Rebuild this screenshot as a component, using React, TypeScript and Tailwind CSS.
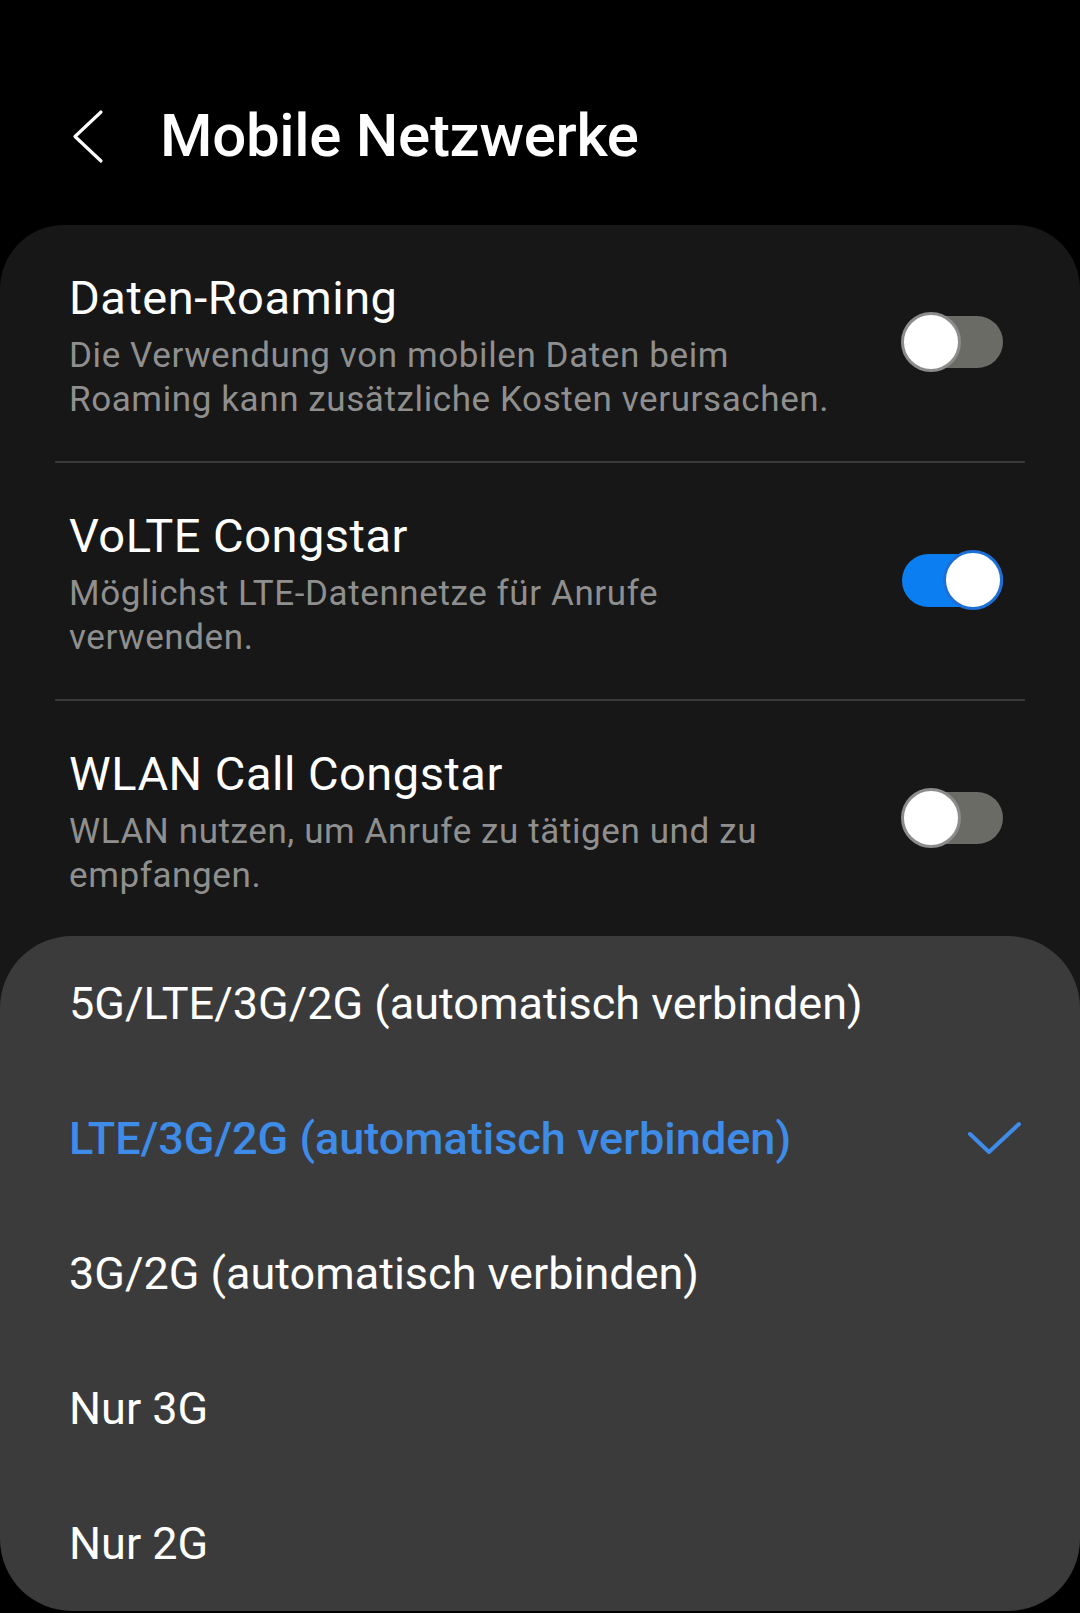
import React from 'react';

interface SettingRow {
  title: string;
  lines: string[];
  on: boolean;
}

const rows: SettingRow[] = [
  {
    title: 'Daten-Roaming',
    lines: ['Die Verwendung von mobilen Daten beim', 'Roaming kann zusätzliche Kosten verursachen.'],
    on: false,
  },
  {
    title: 'VoLTE Congstar',
    lines: ['Möglichst LTE-Datennetze für Anrufe', 'verwenden.'],
    on: true,
  },
  {
    title: 'WLAN Call Congstar',
    lines: ['WLAN nutzen, um Anrufe zu tätigen und zu', 'empfangen.'],
    on: false,
  },
];

const options = [
  '5G/LTE/3G/2G (automatisch verbinden)',
  'LTE/3G/2G (automatisch verbinden)',
  '3G/2G (automatisch verbinden)',
  'Nur 3G',
  'Nur 2G',
];

const Toggle: React.FC<{ on: boolean }> = ({ on }) => {
  if (on) {
    return (
      <div className="relative w-[101px] h-[53px] rounded-full bg-[#0b7ff2] shrink-0 -mt-[8px]">
        <div className="absolute right-0 top-1/2 -translate-y-1/2 w-[60px] h-[60px] rounded-full bg-white border-[3px] border-[#1d6fd6]" />
      </div>
    );
  }
  return (
    <div className="relative w-[101px] h-[52px] rounded-full bg-[#6b6b66] shrink-0 -mt-[8px]">
      <div className="absolute -left-[1px] top-1/2 -translate-y-1/2 w-[60px] h-[60px] rounded-full bg-white border-[3px] border-[#8c8c8c]" />
    </div>
  );
};

export default function App() {
  const selected = 1;

  return (
    <div
      className="relative w-[1080px] h-[1613px] bg-black overflow-hidden"
      style={{ fontFamily: 'Roboto, "Noto Sans", sans-serif' }}
    >
      {/* HEADER */}
      <div className="h-[225px] flex items-center pt-[46px]">
        <svg width="40" height="60" viewBox="0 0 40 60" className="ml-[68px]">
          <path d="M33 6 L7 30.5 L33 55" fill="none" stroke="#ffffff" strokeWidth="3.2" strokeLinecap="round" strokeLinejoin="round" />
        </svg>
        <h1 className="ml-[52px] text-[60px] leading-[70px] font-medium text-white tracking-[-0.3px]">
          Mobile Netzwerke
        </h1>
      </div>

      {/* SETTINGS CARD */}
      <div className="bg-[#171717] rounded-t-[64px] h-[1200px]">
        {rows.map((row, i) => (
          <div key={row.title}>
            <div className="flex items-center justify-between pl-[69px] pr-[77px] pt-[45px] pb-[39px]">
              <div>
                <div className="text-[47px] leading-[56px] text-white tracking-[0.5px]">{row.title}</div>
                <div className="mt-[8px] text-[35px] leading-[44px] text-[#8f8f8f] tracking-[0.6px] whitespace-nowrap">
                  {row.lines.map((l) => (
                    <div key={l}>{l}</div>
                  ))}
                </div>
              </div>
              <Toggle on={row.on} />
            </div>
            {i < rows.length - 1 && <div className="mx-[55px] h-[2px] bg-[#3a3a3a]" />}
          </div>
        ))}
      </div>

      {/* BOTTOM SHEET */}
      <div className="absolute left-0 right-0 top-[936px] h-[675px] bg-[#3b3b3b] rounded-[72px] flex flex-col">
        {options.map((opt, i) => (
          <div key={opt} className="h-[135px] flex items-center justify-between pl-[69px] pr-[56px]">
            <span
              className={`text-[45px] leading-[52px] ${i === selected ? 'text-[#3e8ce8] font-medium' : 'text-white'}`}
            >
              {opt}
            </span>
            {i === selected && (
              <svg width="60" height="40" viewBox="0 0 60 40">
                <path d="M6 15 L25 33 L55 5" fill="none" stroke="#3e8ce8" strokeWidth="4" strokeLinecap="round" strokeLinejoin="round" />
              </svg>
            )}
          </div>
        ))}
      </div>
    </div>
  );
}
